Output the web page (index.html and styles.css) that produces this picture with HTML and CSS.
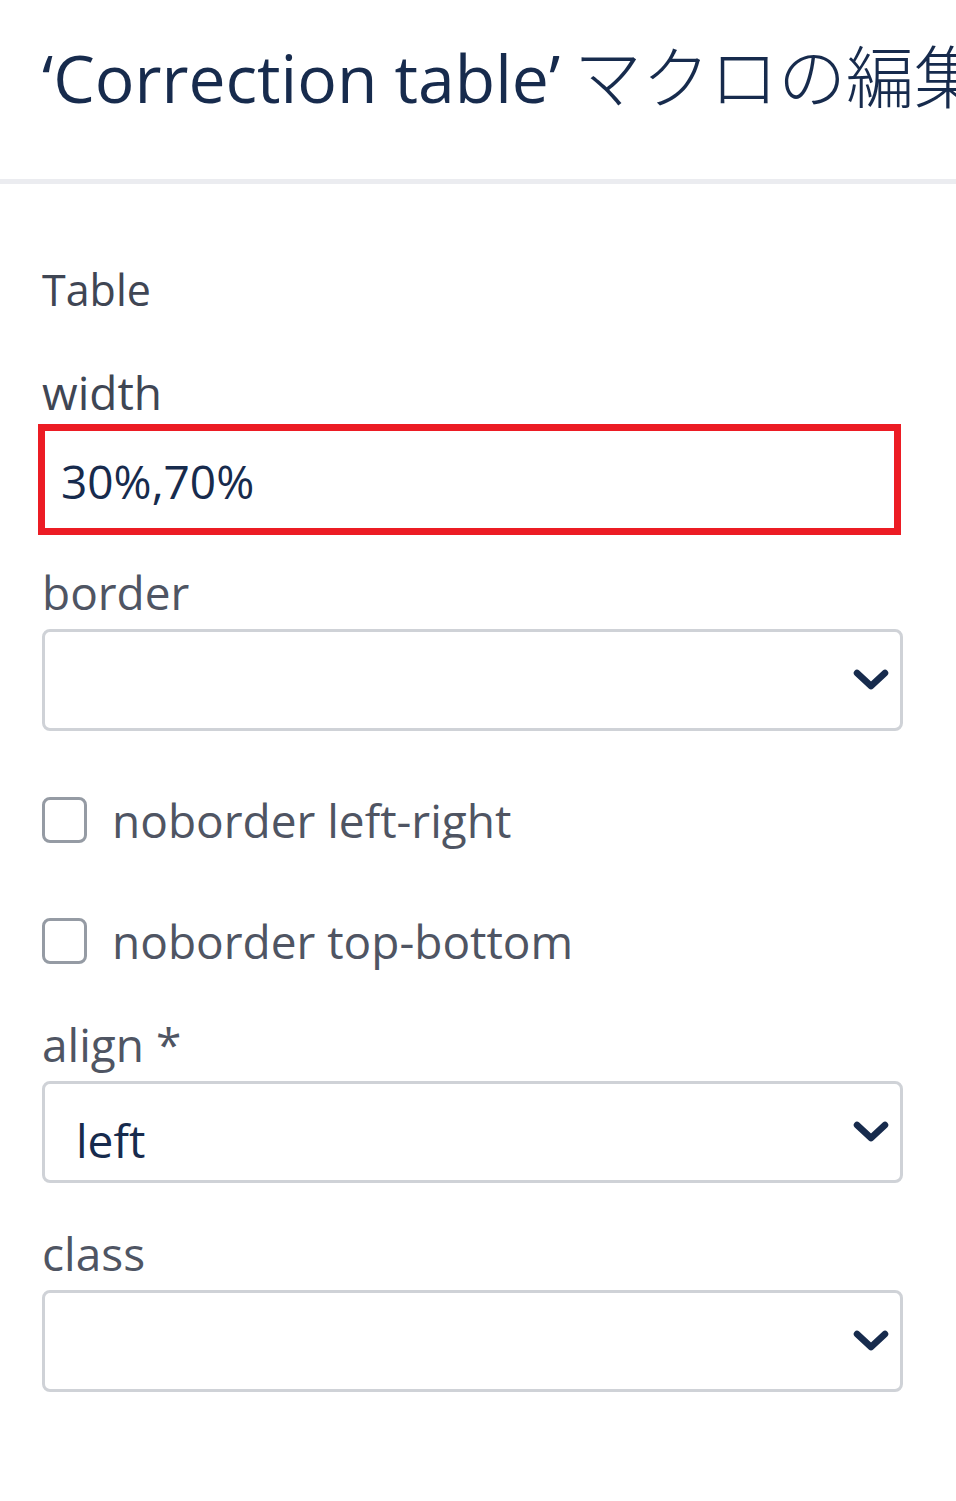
FILE: index.html
```html
<!DOCTYPE html>
<html lang="ja">
<head>
<meta charset="utf-8">
<title>Correction table マクロの編集</title>
<link rel="stylesheet" href="styles.css">
</head>
<body>
<header class="dialog-header">
  <h1 class="dialog-title">‘Correction table’<span class="title-jp">マクロの編集</span></h1>
</header>
<main class="form">
  <div class="section-title">Table</div>

  <label class="field-label label-width" for="f-width">width</label>
  <input id="f-width" class="text-input" type="text" value="30%,70%">

  <label class="field-label label-border" for="f-border">border</label>
  <div class="select" id="f-border">
    <span class="select-value"></span>
    <svg class="chevron" viewBox="0 0 36 22" aria-hidden="true"><path d="M4 4 L18 17 L32 4" /></svg>
  </div>

  <div class="check-row row-first">
    <span class="checkbox"></span>
    <span class="check-label">noborder left-right</span>
  </div>
  <div class="check-row row-second">
    <span class="checkbox"></span>
    <span class="check-label">noborder top-bottom</span>
  </div>

  <label class="field-label label-align" for="f-align">align *</label>
  <div class="select" id="f-align">
    <span class="select-value">left</span>
    <svg class="chevron" viewBox="0 0 36 22" aria-hidden="true"><path d="M4 4 L18 17 L32 4" /></svg>
  </div>

  <label class="field-label label-class" for="f-class">class</label>
  <div class="select" id="f-class">
    <span class="select-value"></span>
    <svg class="chevron" viewBox="0 0 36 22" aria-hidden="true"><path d="M4 4 L18 17 L32 4" /></svg>
  </div>
</main>
</body>
</html>
```
FILE: styles.css
```css
html, body {
  margin: 0;
  padding: 0;
  background: #ffffff;
}

body {
  width: 956px;
  height: 1501px;
  overflow: hidden;
  font-family: "Open Sans", "Noto Sans CJK JP", sans-serif;
}

.dialog-header {
  box-sizing: border-box;
  height: 184px;
  padding: 37px 0 0 42px;
  border-bottom: 5px solid #ebecf0;
  white-space: nowrap;
  overflow: hidden;
}

.dialog-title {
  margin: 0;
  font-size: 66px;
  line-height: 80px;
  height: 80px;
  font-weight: 400;
  color: #172b4d;
  font-family: "Open Sans", "Noto Sans CJK JP", sans-serif;
}

.title-jp {
  font-family: "Noto Sans CJK JP", sans-serif;
  font-size: 68px;
  line-height: 50px;
  font-weight: 300;
  margin-left: 14px;
}

.form {
  display: flex;
  flex-direction: column;
  padding: 0 53px 0 42px;
}

.section-title,
.field-label,
.check-label {
  font-size: 46px;
  line-height: 56px;
  color: #4f5563;
}

.section-title {
  margin-top: 78px;
  font-size: 43px;
  color: #3f4654;
}

.field-label {
  display: block;
}

.label-width { margin-top: 46px; color: #3f4654; }
.label-border { margin-top: 29px; }
.label-align { margin-top: 47px; }
.label-class { margin-top: 42px; }

.text-input {
  box-sizing: border-box;
  margin: 4px 0 0 -4px;
  width: 863px;
  height: 111px;
  border: 7px solid #ec1c24;
  padding: 3px 0 0 16px;
  font-family: "Open Sans", sans-serif;
  font-size: 46px;
  line-height: 94px;
  color: #172b4d;
  background: #fff;
  outline: none;
}

.select {
  position: relative;
  box-sizing: border-box;
  margin-top: 9px;
  height: 102px;
  border: 3px solid #cfd2d7;
  border-radius: 8px;
  background: #fff;
  padding: 16px 0 0 31px;
}

.select-value {
  display: block;
  font-size: 46px;
  line-height: 80px;
  color: #172b4d;
}

.chevron {
  position: absolute;
  right: 11px;
  top: 50%;
  width: 36px;
  height: 22px;
  margin-top: -11px;
  fill: none;
  stroke: #172b4d;
  stroke-width: 6.5;
  stroke-linecap: round;
  stroke-linejoin: round;
}

.check-row {
  display: flex;
  align-items: center;
  min-height: 56px;
  gap: 25px;
}

.row-first { margin-top: 61px; }
.row-second { margin-top: 65px; }

.checkbox {
  box-sizing: border-box;
  width: 45px;
  height: 46px;
  border: 3px solid #959ba4;
  border-radius: 8px;
  background: #fff;
  flex: none;
}
```
